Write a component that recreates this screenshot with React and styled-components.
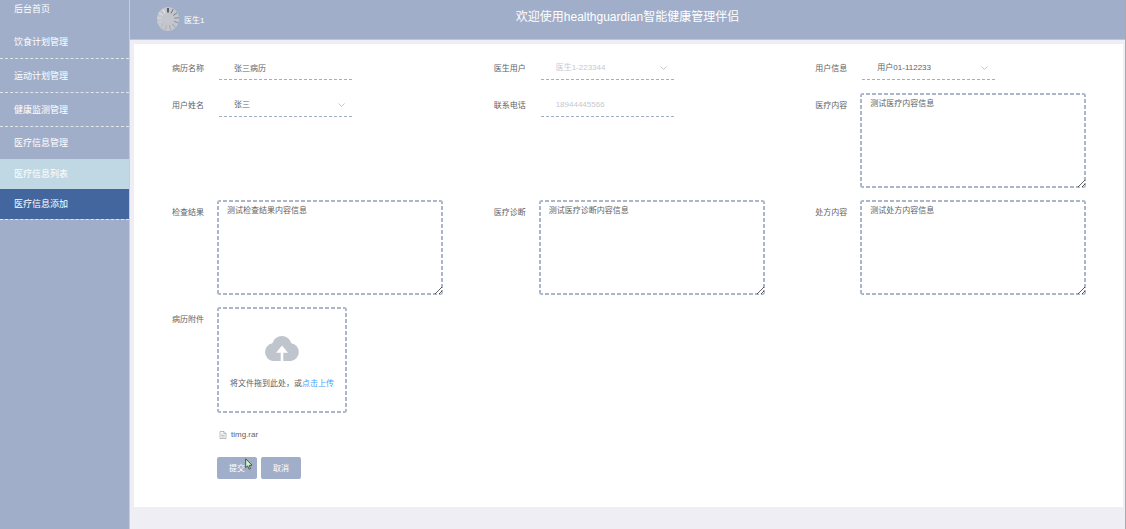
import styled, { createGlobalStyle, css } from "styled-components";

const records = {
  doctor: "医生1-223344",
  user: "用户01-112233",
  name: "张三",
};

const menu = ["饮食计划管理", "运动计划管理", "健康监测管理"];

// spinner spokes, dark at the top and fading clockwise to white
const ticks = [
  "#17191d",
  "#5f646d",
  "#6b7079",
  "#777c85",
  "#858a93",
  "#9297a0",
  "#9da2aa",
  "#a8acb4",
  "#b5b9c0",
  "#d0d3d9",
  "#dddfe4",
  "#e8eaee",
  "#f2f3f6",
];

const Chevron = () => (
  <svg width="7" height="4" viewBox="0 0 7 4" fill="none" aria-hidden="true">
    <path d="M0.5 0.5 3.5 3.4 6.5 0.5" stroke="#b4b8c0" strokeWidth="0.8" />
  </svg>
);

const Avatar = () => (
  <svg width="22" height="24" viewBox="0 0 22 24" aria-hidden="true">
    <ellipse cx="11" cy="12" rx="11" ry="12" fill="#c3c6cd" />
    {ticks.map((color, i) => (
      <path
        key={color}
        d="M11 1V5.600"
        stroke={color}
        strokeWidth={i === 0 ? 1.2 : 0.8}
        transform={`rotate(${(i * 360) / ticks.length} 11 12)`}
      />
    ))}
  </svg>
);

const CloudIcon = () => (
  <svg width="36" height="28" viewBox="0 0 36 28" aria-hidden="true">
    <path
      d="M9 27A9 9 0 0 1 8.400 9.200 9.800 9.800 0 0 1 27.300 9.200 9 9 0 0 1 27 27H19.300V18.800H24L18 11.500 12 18.800H16.700V27Z"
      fill="#c0c4cc"
    />
  </svg>
);

const FileIcon = () => (
  <svg width="8" height="8" viewBox="0 0 8 8" fill="none" aria-hidden="true">
    <path
      d="M1 .5H5L7 2.500V7.500H1ZM4.800.5V2.700H7M2.300 3H3.800M2.300 4.500H5.700M2.300 6H5.700"
      stroke="#909399"
      strokeWidth="0.6"
    />
  </svg>
);

const SelectField = ({ id, label, value, disabled }) => (
  <Field>
    <Label htmlFor={id}>{label}</Label>
    <SelectBox>
      <Select id={id} defaultValue={value} disabled={disabled}>
        <option>{value}</option>
      </Select>
      <Chevron />
    </SelectBox>
  </Field>
);

const TextField = ({ id, label, value, disabled }) => (
  <Field>
    <Label htmlFor={id}>{label}</Label>
    <Input id={id} defaultValue={value} disabled={disabled} />
  </Field>
);

const AreaField = ({ id, label, value }) => (
  <Field>
    <Label htmlFor={id}>{label}</Label>
    <TextArea id={id} defaultValue={value} />
  </Field>
);

const App = () => {
  return (
    <>
      <GlobalStyle />
      <Page>
        <Sidebar>
          <HomeLink href="#home">后台首页</HomeLink>
          {menu.map((item) => (
            <MenuLink key={item} href="#menu">
              {item}
            </MenuLink>
          ))}
          <GroupLink href="#medical">医疗信息管理</GroupLink>
          <SubMenu>
            <SubLink href="#list" $bg="#c0d8e4">
              医疗信息列表
            </SubLink>
            <SubLink href="#add" $bg="#43669e">
              医疗信息添加
            </SubLink>
          </SubMenu>
        </Sidebar>
        <Content>
          <Header>
            <Profile>
              <Avatar />
              <span>医生1</span>
            </Profile>
            <Title>欢迎使用healthguardian智能健康管理伴侣</Title>
          </Header>
          <Card onSubmit={(e) => e.preventDefault()}>
            <Grid>
              <TextField id="record" label="病历名称" value="张三病历" />
              <SelectField
                id="doctor"
                label="医生用户"
                value={records.doctor}
                disabled
              />
              <SelectField id="user" label="用户信息" value={records.user} />
              <SelectField id="name" label="用户姓名" value={records.name} />
              <TextField
                id="phone"
                label="联系电话"
                value="18944445566"
                disabled
              />
              <AreaField
                id="content"
                label="医疗内容"
                value="测试医疗内容信息"
              />
              <AreaField
                id="result"
                label="检查结果"
                value="测试检查结果内容信息"
              />
              <AreaField
                id="diagnosis"
                label="医疗诊断"
                value="测试医疗诊断内容信息"
              />
              <AreaField
                id="prescription"
                label="处方内容"
                value="测试处方内容信息"
              />
              <Field>
                <Label as="span">病历附件</Label>
                <div>
                  <Upload>
                    <CloudIcon />
                    <p>
                      将文件拖到此处，或<a href="#upload">点击上传</a>
                    </p>
                  </Upload>
                  <FileRow>
                    <FileIcon />
                    timg.rar
                  </FileRow>
                </div>
              </Field>
            </Grid>
            <Actions>
              <Button type="submit">
                提交
                <Pointer viewBox="0 0 8 12" aria-hidden="true">
                  <path
                    d="M.7.8V9.600L2.700 7.900 4.100 11.200 5.500 10.500 4.200 7.400 7 7.200Z"
                    fill="#d3f5c8"
                    stroke="#2b3530"
                    strokeWidth="0.8"
                  />
                </Pointer>
              </Button>
              <Button type="button">取消</Button>
            </Actions>
          </Card>
        </Content>
      </Page>
    </>
  );
};

const GlobalStyle = createGlobalStyle`
  * {
    box-sizing: border-box;
  }
  body {
    margin: 0;
    background: #eeeef4;
    color: #606266;
    font: 8px/12px "Liberation Sans", "Noto Sans CJK SC", sans-serif;
  }
  input, select, textarea, button {
    font: inherit;
    color: inherit;
  }
  a {
    text-decoration: none;
  }
  p {
    margin: 0;
  }
`;

// short dashes, finer than the ones border-style gives at this weight
const dashes = css`
  border: 0;
  border-radius: 3px;
  background-image: repeating-linear-gradient(
      90deg,
      #acb6ca 0 4px,
      transparent 4px 6px
    ),
    repeating-linear-gradient(90deg, #acb6ca 0 4px, transparent 4px 6px),
    repeating-linear-gradient(#acb6ca 0 4px, transparent 4px 6px),
    repeating-linear-gradient(#acb6ca 0 4px, transparent 4px 6px);
  background-size: 100% 2px, 100% 2px, 2px 100%, 2px 100%;
  background-position: top, bottom, left, right;
  background-repeat: no-repeat;
`;

const Page = styled.div`
  display: flex;
  min-height: 100vh;
  border-right: 1px solid #a9a9ae;
`;

const Sidebar = styled.nav`
  display: flex;
  flex-direction: column;
  flex: 0 0 129px;
  background: #a1aec9;
  font-size: 9px;
`;

const MenuLink = styled.a`
  display: flex;
  align-items: center;
  height: 34px;
  padding-left: 14px;
  color: #fff;
  border-bottom: 1px dashed #dfe6ec;
`;

const HomeLink = styled(MenuLink)`
  height: 25px;
  padding-bottom: 7px;
  border-bottom: 0;
`;

const GroupLink = styled(MenuLink)`
  height: 32px;
  border-bottom: 0;
`;

const SubMenu = styled.div`
  border-bottom: 1px dashed #dfe6ec;
`;

const SubLink = styled(MenuLink)`
  height: 30px;
  border-bottom: 0;
  background: ${({ $bg }) => $bg};
`;

const Content = styled.main`
  flex: 1;
  min-width: 0;
  border-left: 1px solid #c6cddb;
`;

const Header = styled.header`
  display: grid;
  grid-template-columns: 1fr auto 1fr;
  align-items: start;
  height: 40px;
  padding: 7px 27px 0;
  color: #fff;
  background: #a1aec9;
  border-bottom: 1px solid #bcc6d6;
`;

const Profile = styled.div`
  display: flex;
  align-items: center;
  gap: 5px;
  span {
    padding-top: 4px;
  }
`;

const Title = styled.h1`
  margin: 0;
  font-size: 12px;
  font-weight: 400;
  line-height: 20px;
`;

const Card = styled.form`
  margin: 4px 2px 0 4px;
  padding: 12px 12px 28px;
  background: #fff;
`;

const Grid = styled.div`
  display: grid;
  grid-template-columns: repeat(3, 1fr);
  row-gap: 13px;
`;

const Field = styled.div`
  display: flex;
  align-items: flex-start;
`;

const Label = styled.label`
  flex: 0 0 71px;
  padding: 2px 13px 0 0;
  line-height: 22px;
  text-align: right;
`;

const Input = styled.input`
  width: 133px;
  height: 24px;
  margin-left: 2px;
  padding: 0 15px;
  background: none;
  border: 0;
  border-bottom: 1px dashed #a1aec9;
  outline: 0;
  &:disabled {
    color: #c6c9d0;
    opacity: 1;
  }
`;

const SelectBox = styled.div`
  display: flex;
  align-items: center;
  width: 133px;
  margin-left: 2px;
  padding-right: 7px;
  border-bottom: 1px dashed #a1aec9;
`;

const Select = styled.select`
  flex: 1;
  height: 23px;
  padding: 1px 15px 0;
  appearance: none;
  background: none;
  border: 0;
  outline: 0;
  &:disabled {
    color: #c6c9d0;
    opacity: 1;
  }
`;

const TextArea = styled.textarea`
  ${dashes}
  width: 226px;
  height: 95px;
  margin-bottom: -1px;
  padding: 5px 10px;
  outline: 0;
`;

const Upload = styled.div`
  ${dashes}
  display: flex;
  flex-direction: column;
  align-items: center;
  width: 130px;
  height: 106px;
  padding-top: 27px;
  p {
    padding-top: 16px;
  }
  a {
    color: #409eff;
  }
`;

const FileRow = styled.div`
  display: flex;
  align-items: center;
  gap: 4px;
  padding: 16px 2px;
`;

const Actions = styled.div`
  display: flex;
  gap: 4px;
  padding-left: 71px;
`;

const Button = styled.button`
  position: relative;
  width: 40px;
  height: 22px;
  padding: 1px 0 0;
  color: #fff;
  background: #a1aec9;
  border: 0;
  border-radius: 2px;
`;

const Pointer = styled.svg`
  position: absolute;
  left: 28px;
  top: 1px;
  width: 8px;
  height: 12px;
`;

export default App;
